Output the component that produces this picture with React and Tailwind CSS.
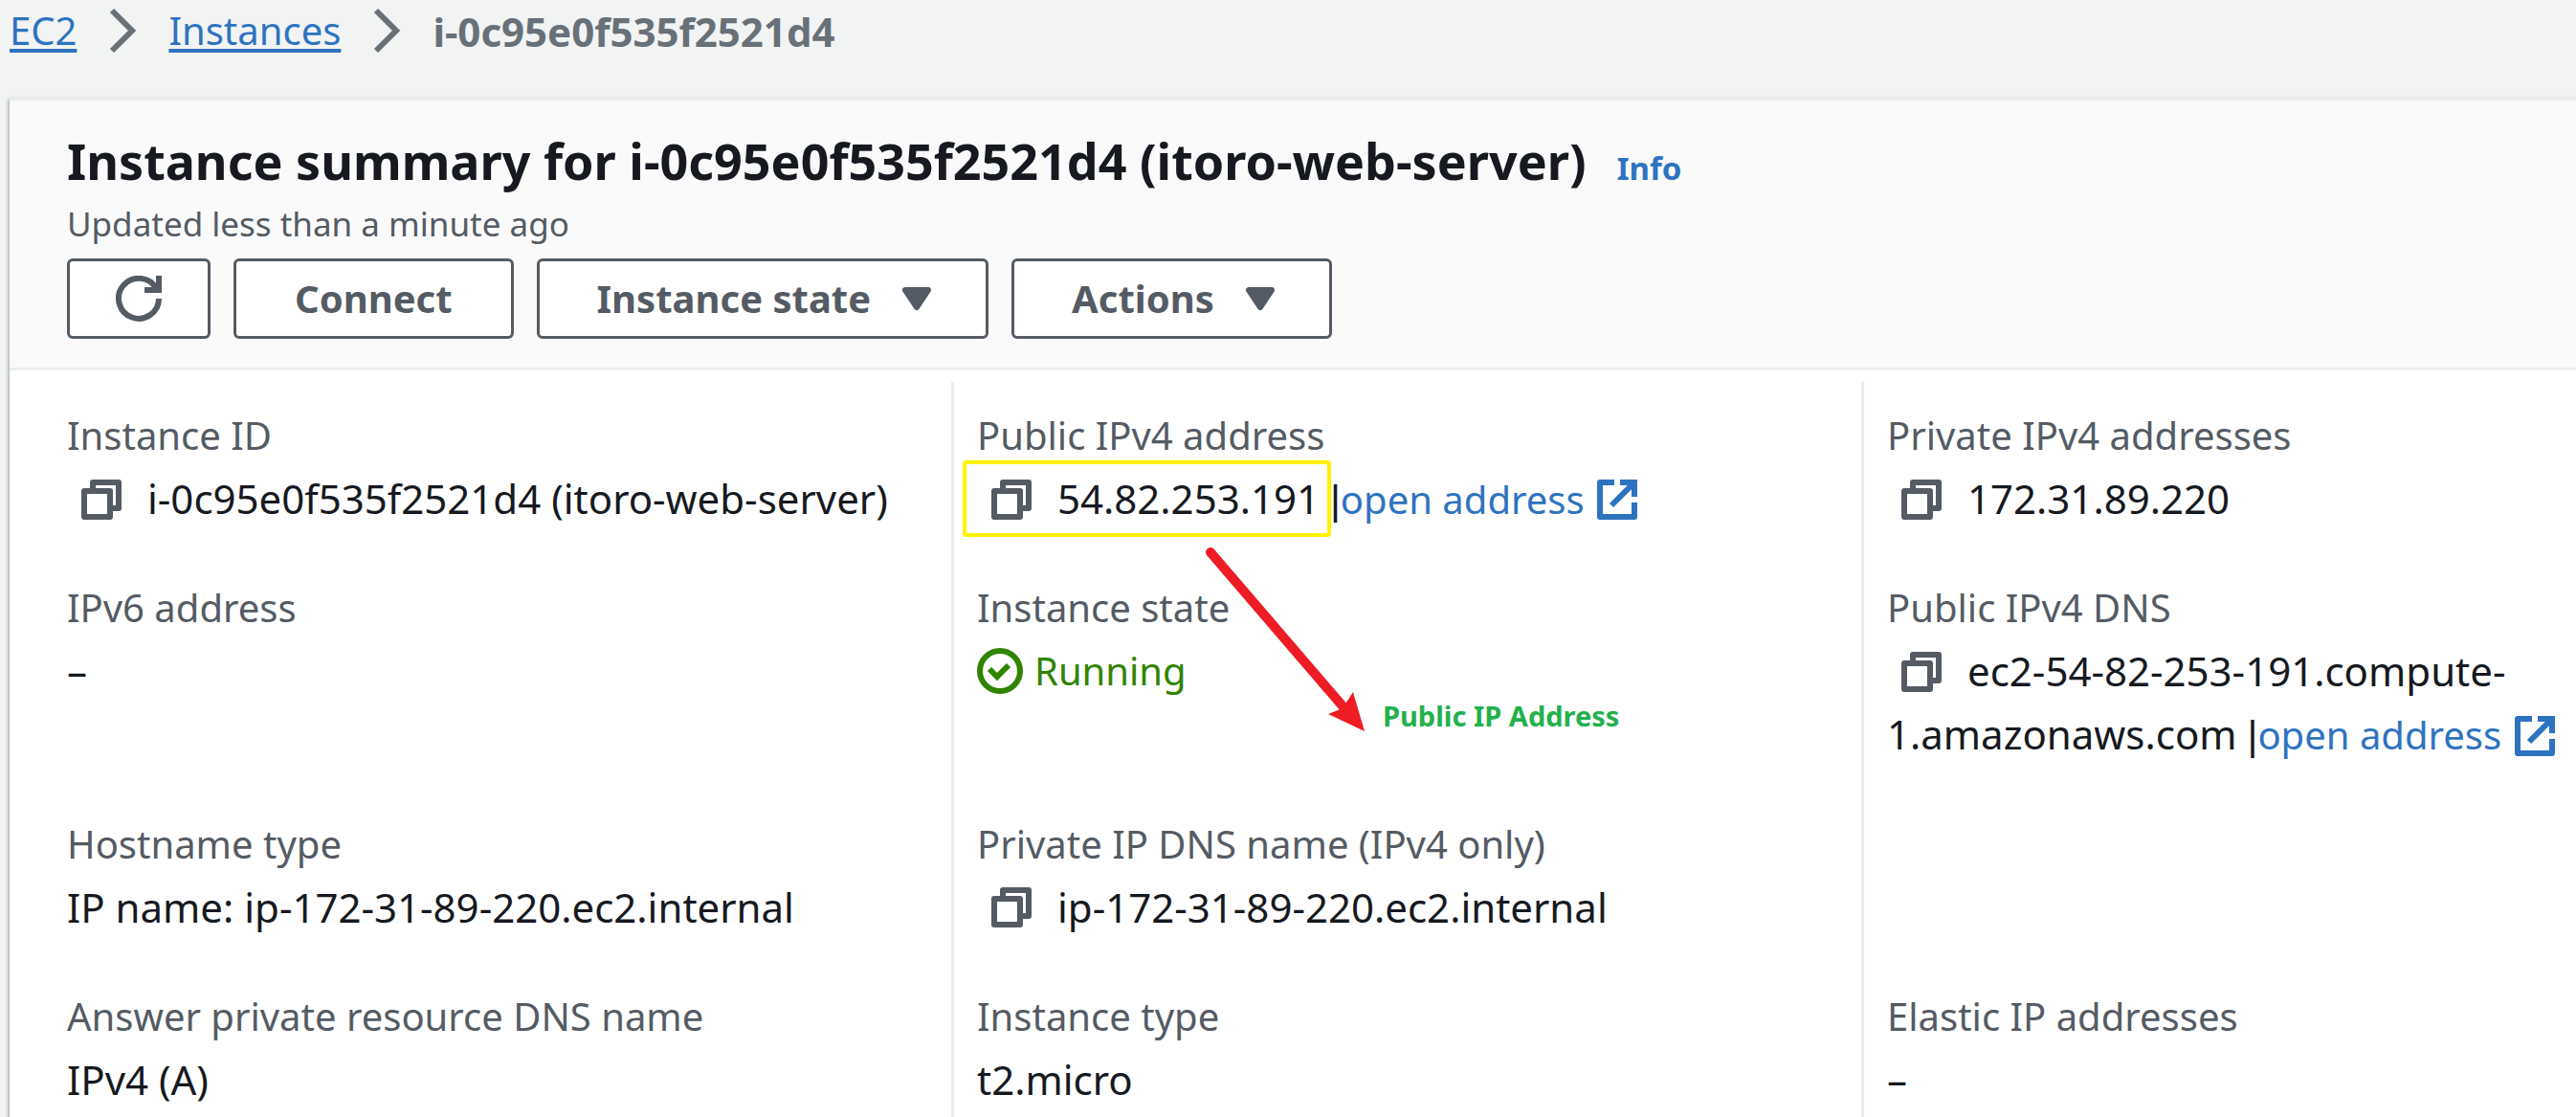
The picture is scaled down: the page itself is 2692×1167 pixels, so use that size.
import React from "react";

function CopyIcon() {
  return (
    <svg viewBox="0 0 48 48" className="size-12" fill="none" stroke="currentColor" strokeWidth="6" strokeLinejoin="round" aria-hidden="true">
      <path d="M6 15h27v27H6z" />
      <path d="M15 12V6h27v27h-6" />
    </svg>
  );
}

function ExternalIcon() {
  return (
    <svg viewBox="0 0 48 48" className="mb-2 inline-block size-12 align-middle" fill="none" stroke="currentColor" strokeWidth="6" aria-hidden="true">
      <path d="M21 6H6v36h36V27" strokeLinejoin="round" />
      <path d="M27 6h15v15" />
      <path d="M41 7 18 30" />
    </svg>
  );
}

function Chevron() {
  return (
    <svg viewBox="0 0 48 48" className="size-12 text-[#687078]" fill="none" stroke="currentColor" strokeWidth="6" aria-hidden="true">
      <path d="M13 3l21 21-21 21" />
    </svg>
  );
}

function Caret() {
  return (
    <svg viewBox="0 0 48 48" className="size-12" fill="currentColor" stroke="currentColor" strokeWidth="6" strokeLinejoin="round" aria-hidden="true">
      <path d="M12 15h24L24 33z" />
    </svg>
  );
}

function RefreshIcon() {
  return (
    <svg viewBox="0 0 48 48" className="size-12" fill="none" stroke="currentColor" strokeWidth="6" aria-hidden="true">
      <path d="M45 24A21 21 0 1 1 42 13" />
      <path d="M45 0v15H30" />
    </svg>
  );
}

function CheckCircle() {
  return (
    <svg viewBox="0 0 48 48" className="size-12 shrink-0" fill="none" stroke="currentColor" strokeWidth="6" aria-hidden="true">
      <circle cx="24" cy="24" r="21" />
      <path d="M13 22l8 8 12-12" />
    </svg>
  );
}

function CopyButton({ label }) {
  return (
    <button type="button" aria-label={`Copy ${label}`} className="mr-6 mb-2 ml-3 inline-block align-middle text-[#545b64]">
      <CopyIcon />
    </button>
  );
}

function OpenAddress() {
  return (
    <span className="leading-none whitespace-nowrap">
      <span className="font-['Liberation_Sans',sans-serif]">|</span>
      <a href="#open-address" className="text-[40px] leading-none text-[#2e73c0]">
        open address <ExternalIcon />
      </a>
    </span>
  );
}

function Button({ children, className = "px-[61px]", ...rest }) {
  return (
    <button
      type="button"
      className={`flex h-[84px] items-center gap-6 rounded-md border-3 border-[#545b64] bg-white text-[40px] font-bold whitespace-nowrap text-[#545b64] ${className}`}
      {...rest}
    >
      {children}
    </button>
  );
}

function Field({ label, children, column = 0, last = false }) {
  const edge = column === 0 ? "pl-15" : "border-l-3 border-[#eaeded] pl-6";
  return (
    <div className={`relative min-w-0 pr-3 leading-[66px] ${last ? "" : "pb-12"} ${edge}`}>
      {label && (
        <dl>
          <dt className="text-[40px] text-[#545b64]">{label}</dt>
          <dd className="text-[42px] text-[#16191f]">{children}</dd>
        </dl>
      )}
    </div>
  );
}

function Callout() {
  return (
    <span className="pointer-events-none absolute top-full left-0 flex items-end pt-[10px] pl-58">
      <svg viewBox="0 0 180 200" className="h-[200px] w-[180px]" aria-hidden="true">
        <path d="M12 13 152 176" stroke="#ee1c25" strokeWidth="10" strokeLinecap="round" />
        <path d="M173 200 135 182 150 176 161 159z" fill="#ee1c25" />
      </svg>
      <span className="pl-3 text-[29px] leading-8 font-bold whitespace-nowrap text-[#22b14c]">Public IP Address</span>
    </span>
  );
}

export default function App() {
  return (
    <div className="flex min-h-screen flex-col overflow-hidden bg-[#f2f3f3] pl-2.5 font-['Noto_Sans','Open_Sans',sans-serif] text-[#16191f]">
      <nav aria-label="Breadcrumb" className="flex h-16 items-center gap-6 text-[40px] whitespace-nowrap">
        <a href="#ec2" className="text-[#2e73c0] underline decoration-4 underline-offset-4">EC2</a>
        <Chevron />
        <a href="#instances" className="text-[#2e73c0] underline decoration-4 underline-offset-4">Instances</a>
        <Chevron />
        <span className="text-[42px] font-bold text-[#687078]">i-0c95e0f535f2521d4</span>
      </nav>

      <main className="mt-[38px] flex flex-1 flex-col border-t-3 border-[#eaeded] bg-white shadow-[0_3px_4px_1px_rgba(0,28,36,0.4)]">
        <header className="border-b-3 border-[#eaeded] bg-[#fafafa] px-15 pt-[30px] pb-[30px]">
          <div className="flex items-baseline gap-8 leading-[66px] whitespace-nowrap">
            <h1 className="text-[52px] font-bold">Instance summary for i-0c95e0f535f2521d4 (itoro-web-server)</h1>
            <a href="#info" className="text-[33px] font-bold text-[#2e73c0]">Info</a>
          </div>
          <p className="text-[35px] leading-[50px] text-[#545b64]">Updated less than a minute ago</p>
          <div className="mt-[11px] flex gap-6">
            <Button className="px-12" aria-label="Refresh">
              <RefreshIcon />
            </Button>
            <Button>Connect</Button>
            <Button className="pr-12 pl-[60px]">
              Instance state <Caret />
            </Button>
            <Button className="pr-12 pl-[60px]">
              Actions <Caret />
            </Button>
          </div>
        </header>

        <div className="mt-3 grid flex-1 grid-cols-[984fr_951fr_747fr] grid-rows-[auto_auto_auto_1fr]">
          <div className="col-span-3 grid grid-cols-subgrid [&>div]:pt-[23px]">
            <Field label="Instance ID">
              <CopyButton label="instance ID" />
              i-0c95e0f535f2521d4 (itoro-web-server)
            </Field>
            <Field label="Public IPv4 address" column={1}>
              <span className="relative inline-block">
                <CopyButton label="public IPv4 address" />
                54.82.253.191
                <span className="pointer-events-none absolute -inset-y-[7px] -right-3 -left-[15px] rounded-sm border-4 border-[#fff200]" />
                <Callout />
              </span>{" "}
              <OpenAddress />
            </Field>
            <Field label="Private IPv4 addresses" column={2}>
              <CopyButton label="private IPv4 address" />
              172.31.89.220
            </Field>
          </div>

          <Field label="IPv6 address">–</Field>
          <Field label="Instance state" column={1}>
            <span className="flex items-center gap-3 text-[40px] text-[#318400]">
              <CheckCircle />
              Running
            </span>
          </Field>
          <Field label="Public IPv4 DNS" column={2}>
            <CopyButton label="public IPv4 DNS" />
            ec2-54-82-253-191.compute-1.amazonaws.com <OpenAddress />
          </Field>

          <Field label="Hostname type">IP name: ip-172-31-89-220.ec2.internal</Field>
          <Field label="Private IP DNS name (IPv4 only)" column={1}>
            <CopyButton label="private IP DNS name" />
            ip-172-31-89-220.ec2.internal
          </Field>
          <Field column={2} />

          <Field label="Answer private resource DNS name" last>IPv4 (A)</Field>
          <Field label="Instance type" column={1} last>t2.micro</Field>
          <Field label="Elastic IP addresses" column={2} last>–</Field>
        </div>
      </main>
    </div>
  );
}
